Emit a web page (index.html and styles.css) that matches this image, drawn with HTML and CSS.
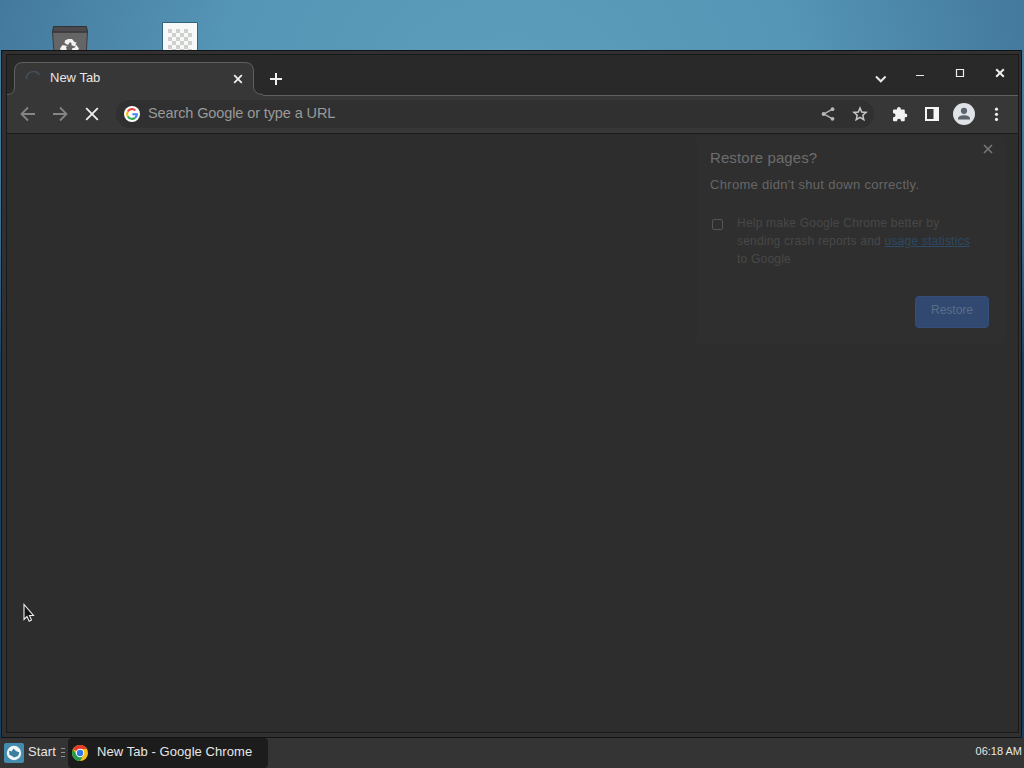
FILE: index.html
```html
<!DOCTYPE html>
<html lang="en">
<head>
    <meta charset="UTF-8">
    <title>New Tab - Google Chrome</title>
    <link rel="stylesheet" href="styles.css">
</head>
<body>
    <div class="desktop">
        <svg class="desktop-icon trash" width="38" height="40" viewBox="0 0 38 40">
            <path d="M1.500 7h35l-2 33H4z" fill="#656565" stroke="#383b3e"/>
            <path d="M2.500 1.500h33l1 5.500h-35z" fill="#4b494b" stroke="#303236"/>
            <path d="M14 15.500l3-1.500h4l3 3.500 1.500-.5-1.500 4.500-4-1.500 1-1-2-2-2 3-3.500-2zM11.500 20l5 1-1.500 1 1 4h-6l-1-2.500zM25 19.500l3 4-2 3h-5v-3l3-1z" fill="#f2f2f2"/>
        </svg>
        <svg class="desktop-icon file" width="36" height="42" viewBox="0 0 36 42">
            <defs>
                <pattern id="checks" width="8" height="8" patternUnits="userSpaceOnUse" x="6" y="7">
                    <path d="M0 0h4v4H0zM4 4h4v4H4z" fill="#cfcfcd"/>
                </pattern>
            </defs>
            <path d="M.5 .5h35v42H.5z" fill="#f7f9f9" stroke="#2f6480"/>
            <path d="M6 7h24v35H6z" fill="url(#checks)"/>
        </svg>

        <div class="window">
            <div class="window-inner">
                <div class="tab-strip">
                    <div class="tab">
                        <svg class="tab-shape" width="257" height="35" viewBox="0 0 257 35">
                            <path d="M0 33.500Q7.500 33.500 7.500 26V10Q7.500 1.500 16 1.500H238Q246.500 1.500 246.500 10V25Q246.500 33.500 256 33.500V35H0z" fill="#373737"/>
                            <path d="M0 33.500Q7.500 33.500 7.500 26V10Q7.500 1.500 16 1.500H238Q246.500 1.500 246.500 10V25Q246.500 33.500 256 33.500" fill="none" stroke="#606060"/>
                        </svg>
                        <svg class="spinner" width="16" height="16" viewBox="0 0 16 16">
                            <path d="M1.500 8A7 7 0 0 1 14.500 4" fill="none" stroke="#44505f" stroke-width="1.500"/>
                        </svg>
                        <span class="tab-title">New Tab</span>
                        <svg class="tab-close" width="10" height="10" viewBox="0 0 10 10">
                            <path d="M1.200 1.200l7.600 7.600M8.800 1.200L1.200 8.800" stroke="#eee" stroke-width="1.800"/>
                        </svg>
                    </div>
                    <svg class="new-tab" width="12" height="12" viewBox="0 0 12 12">
                        <path d="M6 0v12M0 6h12" stroke="#f0f0f0" stroke-width="2"/>
                    </svg>
                    <svg class="window-controls" width="135" height="20" viewBox="0 0 135 20">
                        <path d="M5 10.500l4.800 4.800 4.800-4.800" fill="none" stroke="#e8e8e8" stroke-width="2"/>
                        <path d="M45 9.500h8" stroke="#e8e8e8"/>
                        <path d="M85.500 3.500h7v7h-7z" fill="none" stroke="#eee" stroke-width="1.200"/>
                        <path d="M125.200 3.200l7.600 7.600M132.800 3.200l-7.600 7.600" stroke="#eee" stroke-width="2"/>
                    </svg>
                </div>

                <div class="toolbar">
                    <svg width="16" height="16" viewBox="0 0 16 16">
                        <path d="M15 8H2M8 1.500L1.500 8 8 14.500" fill="none" stroke="#858585" stroke-width="1.800"/>
                    </svg>
                    <svg width="16" height="16" viewBox="0 0 16 16">
                        <path d="M1 8h13M8 1.500L14.500 8 8 14.500" fill="none" stroke="#858585" stroke-width="1.800"/>
                    </svg>
                    <svg width="16" height="16" viewBox="0 0 16 16">
                        <path d="M2.200 2.200l11.600 11.600M13.800 2.200L2.200 13.800" stroke="#f0f0f0" stroke-width="1.800"/>
                    </svg>
                    <div class="omnibox">
                        <svg width="16" height="16" viewBox="0 0 16 16">
                            <circle cx="8" cy="8" r="8" fill="#fff"/>
                            <g fill="none" stroke-width="2.100">
                                <path d="M11.400 4.400A4.900 4.900 0 0 0 3.800 5.500" stroke="#ea4335"/>
                                <path d="M3.800 5.500A4.900 4.900 0 0 0 3.800 10.500" stroke="#fbbc05"/>
                                <path d="M3.800 10.500A4.900 4.900 0 0 0 11 11.900" stroke="#34a853"/>
                                <path d="M11 11.900A4.900 4.900 0 0 0 12.900 8.300H8.300" stroke="#4285f4"/>
                            </g>
                        </svg>
                        <span class="placeholder">Search Google or type a URL</span>
                        <svg class="share" width="16" height="16" viewBox="0 0 16 16">
                            <path d="M12.500 3.200L4 8l8.500 4.800" fill="none" stroke="#b8b8b8" stroke-width="1.400"/>
                            <circle cx="12.500" cy="3.200" r="1.900" fill="#b8b8b8"/>
                            <circle cx="3.600" cy="8" r="2" fill="#b8b8b8"/>
                            <circle cx="12.500" cy="12.800" r="1.900" fill="#b8b8b8"/>
                        </svg>
                        <svg class="star" width="16" height="16" viewBox="0 0 16 16">
                            <path d="M8 2l1.700 4 4.400.4-3.300 2.900 1 4.400L8 11.400l-3.800 2.300 1-4.400-3.300-2.900L6.300 6z" fill="none" stroke="#c8c8c8" stroke-width="1.500"/>
                        </svg>
                    </div>
                    <svg class="puzzle" width="16" height="16" viewBox="0 0 16 16">
                        <path d="M1 4.500q0-1 1-1h3V3a1.900 1.900 0 0 1 3.800 0v.5h3q1 0 1 1v3h.6a1.900 1.900 0 0 1 0 3.800h-.6v3q0 1-1 1H9v-.5a1.900 1.900 0 0 0-3.900 0v.5H2q-1 0-1-1v-3h.5a2 2 0 0 0 0-4H1z" fill="#f1f1f1"/>
                    </svg>
                    <svg class="side-panel" width="16" height="16" viewBox="0 0 16 16">
                        <path fill-rule="evenodd" d="M1 1h14v14H1zM3 3v10h6.500V3z" fill="#f5f5f5"/>
                    </svg>
                    <svg class="avatar" width="22" height="22" viewBox="0 0 22 22">
                        <circle cx="11" cy="11" r="11" fill="#dfe2e7"/>
                        <circle cx="11" cy="7.800" r="3.100" fill="#5b636c"/>
                        <path d="M5 16.500v-1Q5 12.500 11 12.300q6 .2 6 3.200v1z" fill="#5b636c"/>
                    </svg>
                    <svg class="menu-dots" width="16" height="16" viewBox="0 0 16 16">
                        <circle cx="8.500" cy="3.200" r="1.600" fill="#eee"/>
                        <circle cx="8.500" cy="8.300" r="1.600" fill="#eee"/>
                        <circle cx="8.500" cy="13.400" r="1.600" fill="#eee"/>
                    </svg>
                </div>

                <div class="page"></div>
            </div>

            <div class="restore">
                <svg class="restore-close" width="10" height="10" viewBox="0 0 10 10">
                    <path d="M1 1l8 8M9 1L1 9" stroke="#777" stroke-width="1.600"/>
                </svg>
                <div class="restore-title">Restore pages?</div>
                <div class="restore-text">Chrome didn't shut down correctly.</div>
                <div class="restore-help">
                    <span class="checkbox"></span>
                    <div class="help-text">
                        <div>Help make Google Chrome better by</div>
                        <div>sending crash reports and <a>usage statistics</a></div>
                        <div>to Google</div>
                    </div>
                </div>
                <div class="restore-button">Restore</div>
            </div>
        </div>

        <div class="taskbar">
            <svg class="start-icon" width="20" height="20" viewBox="0 0 20 20">
                <rect width="20" height="20" rx="2" fill="#438cae"/>
                <circle cx="10" cy="10" r="7.200" fill="#f2f7f8"/>
                <path d="M5 7.500l2.500 1 2-3 2.500 2.500 3.500 1.500-1.500 3.500-4 1.500-2-1.500-2.500-1z" fill="#397f9e"/>
            </svg>
            <span class="start">Start</span>
            <svg class="grip" width="5" height="10" viewBox="0 0 5 10">
                <path d="M0 .5h4M0 4.500h4M0 8.500h4" stroke="#909090"/>
            </svg>
            <div class="task">
                <svg width="16" height="16" viewBox="0 0 16 16">
                    <circle cx="8" cy="8" r="8" fill="#fbc116"/>
                    <path d="M8 8L1.100 4A8 8 0 0 1 14.900 4H8z" fill="#e33b2e"/>
                    <path d="M1.100 4A8 8 0 0 0 8 16L11.500 10 8 8 4.600 10z" fill="#249a4c"/>
                    <circle cx="8" cy="8" r="4.200" fill="#fff"/>
                    <circle cx="8" cy="8" r="3.200" fill="#2f79e8"/>
                </svg>
                <span class="task-title">New Tab - Google Chrome</span>
            </div>
            <span class="clock">06:18 AM</span>
        </div>

        <svg class="cursor" width="13" height="20" viewBox="0 0 13 20">
            <path d="M1 1.500v15l3-3 2.200 4.700 2.300-1.200-2-4.500h4z" fill="#151515" stroke="#eee" stroke-width="1.100"/>
        </svg>
    </div>
</body>
</html>
```
FILE: styles.css
```css
body {
    margin: 0;
    overflow: hidden;
    font-family: "Liberation Sans", Arial, sans-serif;
    color: #e6e6e6;
}
svg {
    display: block;
    flex: none;
}
.desktop {
    position: relative;
    display: flex;
    flex-direction: column;
    justify-content: flex-end;
    width: 1024px;
    height: 768px;
    overflow: hidden;
    background: radial-gradient(ellipse 720px 430px at 510px 60px, #5b9dbb 0%, #5595b5 40%, #407499 78%, #173f63 100%);
}
.desktop-icon {
    position: absolute;
}
.trash {
    left: 51px;
    top: 25px;
}
.file {
    left: 162px;
    top: 22px;
}
.window {
    position: absolute;
    left: 1px;
    top: 50px;
    width: 1021px;
    height: 688px;
    box-sizing: border-box;
    border: 1px solid #111315;
    padding: 3px 2px 4px 4px;
    background: #303030;
}
.window-inner {
    display: flex;
    flex-direction: column;
    height: 100%;
    box-sizing: border-box;
    border: 1px solid #191919;
    background: #2d2d2d;
}
.tab-strip {
    display: flex;
    height: 40px;
    border-bottom: 1px solid #606060;
    background: #292929;
}
.tab {
    position: relative;
    display: flex;
    align-items: center;
    width: 254px;
    height: 41px;
    box-sizing: border-box;
    padding: 6px 11px 0 18px;
}
.tab-shape {
    position: absolute;
    left: 0;
    top: 6px;
}
.spinner, .tab-title, .tab-close {
    position: relative;
}
.tab-title {
    flex: 1;
    margin-left: 9px;
    margin-top: -2px;
    font-size: 13px;
}
.tab-close {
    margin-right: 7px;
    margin-top: 1px;
}
.new-tab {
    margin: 18px 0 0 9px;
}
.window-controls {
    margin: 11px 12px 0 auto;
}
.toolbar {
    display: flex;
    align-items: center;
    gap: 16px;
    height: 37px;
    box-sizing: content-box;
    padding-left: 13px;
    background: #373737;
    border-bottom: 1px solid #1b1b1b;
}
.toolbar > * {
    margin-top: -2px;
}
.omnibox {
    display: flex;
    align-items: center;
    flex: none;
    width: 758px;
    height: 28px;
    box-sizing: border-box;
    padding-left: 8px;
    border-radius: 14px;
    background: #303030;
}
.placeholder {
    margin-left: 8px;
    margin-top: -1px;
    font-size: 14.5px;
    letter-spacing: -0.11px;
    color: #999;
}
.share {
    margin-left: auto;
    margin-right: 16px;
}
.star {
    margin-right: 6px;
}
.puzzle {
    margin-left: 2px;
}
.avatar {
    margin-left: -3px;
    margin-right: -3px;
}
.page {
    flex: 1;
    background: #2d2d2d;
}
.restore {
    position: absolute;
    left: 695px;
    top: 86px;
    width: 308px;
    height: 206px;
    box-sizing: border-box;
    padding: 11px 16px 14px 13px;
    background: #2f2f2f;
}
.restore-close {
    position: absolute;
    right: 12px;
    top: 7px;
}
.restore-title {
    font-size: 15px;
    line-height: 20px;
    letter-spacing: 0.1px;
    color: #6d6d6d;
}
.restore-text {
    margin-top: 8px;
    font-size: 13px;
    line-height: 18px;
    letter-spacing: 0.31px;
    color: #666;
}
.restore-help {
    display: flex;
    margin-top: 20px;
    font-size: 12px;
    line-height: 18px;
    letter-spacing: 0.21px;
    white-space: nowrap;
    color: #484848;
}
.checkbox {
    width: 9px;
    height: 9px;
    margin: 5px 14px 0 2px;
    border: 1px solid #555;
    border-radius: 2px;
}
.help-text a {
    color: #2d4965;
    text-decoration: underline;
}
.restore-button {
    width: 72px;
    height: 30px;
    margin: 28px 0 0 auto;
    border: 1px solid #354e7c;
    border-radius: 4px;
    background: #314970;
    color: #5c6d88;
    font-size: 12px;
    line-height: 27px;
    text-align: center;
}
.taskbar {
    display: flex;
    align-items: center;
    height: 30px;
    box-sizing: border-box;
    padding: 0 2px 0 4px;
    background: #343434;
}
.start {
    margin: -4px 5px 0 4px;
    font-size: 13px;
    letter-spacing: 0.1px;
}
.task {
    display: flex;
    align-items: center;
    width: 200px;
    height: 30px;
    box-sizing: border-box;
    margin-left: 2px;
    padding-left: 4px;
    border-radius: 4px;
    background: #1c1c1c;
}
.task-title {
    margin-left: 9px;
    margin-top: -4px;
    font-size: 13px;
    letter-spacing: 0.07px;
    white-space: nowrap;
}
.clock {
    margin-left: auto;
    margin-top: -4px;
    font-size: 11px;
    white-space: nowrap;
}
.cursor {
    position: absolute;
    left: 23px;
    top: 603px;
}
```
